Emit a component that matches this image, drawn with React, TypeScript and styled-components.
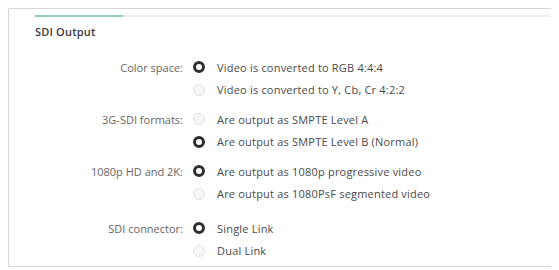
import styled, { createGlobalStyle } from 'styled-components';

type OptionGroup = {
  label: string;
  options: string[];
  selected: number;
};

const groups: OptionGroup[] = [
  {
    label: 'Color space:',
    options: ['Video is converted to RGB 4:4:4', 'Video is converted to Y, Cb, Cr 4:2:2'],
    selected: 0,
  },
  {
    label: '3G-SDI formats:',
    options: ['Are output as SMPTE Level A', 'Are output as SMPTE Level B (Normal)'],
    selected: 1,
  },
  {
    label: '1080p HD and 2K:',
    options: ['Are output as 1080p progressive video', 'Are output as 1080PsF segmented video'],
    selected: 0,
  },
  {
    label: 'SDI connector:',
    options: ['Single Link', 'Dual Link'],
    selected: 0,
  },
];

const App = () => {
  return (
    <>
      <GlobalStyle />
      <Panel>
        <TabStrip>
          <TabIndicator />
        </TabStrip>
        <Title>SDI Output</Title>
        <Form>
          {groups.map((group) => (
            <Group key={group.label}>
              <Label>{group.label}</Label>
              <Options>
                {group.options.map((option, i) => (
                  <Option key={option}>
                    <Radio $checked={i === group.selected} />
                    <OptionText>{option}</OptionText>
                  </Option>
                ))}
              </Options>
            </Group>
          ))}
        </Form>
      </Panel>
    </>
  );
};

const GlobalStyle = createGlobalStyle`
  body {
    margin: 8px;
    background: #ffffff;
    font-family: 'Open Sans', 'Noto Sans', sans-serif;
  }
`;

const Panel = styled.section`
  width: 549px;
  height: 259px;
  box-sizing: border-box;
  border: 1px solid #d6d6d6;
  border-radius: 2px;
  box-shadow: 0 0 2px rgba(0, 0, 0, 0.12);
  background: #ffffff;
  padding: 6px 3px 0 26px;
`;

const TabStrip = styled.div`
  height: 2px;
  background: #eeeeee;
`;

const TabIndicator = styled.div`
  width: 88px;
  height: 2px;
  background: #92cfb8;
`;

const Title = styled.h3`
  margin: 8px 0 0;
  font-size: 11px;
  line-height: 14px;
  font-weight: 600;
  letter-spacing: 0.2px;
  color: #3a3a3a;
`;

const Form = styled.div`
  display: flex;
  flex-direction: column;
  gap: 7px;
  margin-top: 17px;
`;

const Group = styled.div`
  display: flex;
  &:last-child {
    margin-top: 5px;
  }
`;

const Label = styled.div`
  width: 148px;
  text-align: right;
  font-size: 11px;
  line-height: 23px;
  color: #666666;
`;

const Options = styled.div`
  display: flex;
  flex-direction: column;
  margin-left: 10px;
`;

const Option = styled.div`
  display: flex;
  align-items: center;
  height: 22.5px;
`;

const Radio = styled.span<{ $checked: boolean }>`
  width: 12px;
  height: 12px;
  box-sizing: border-box;
  border-radius: 50%;
  border: ${({ $checked }) => ($checked ? '3px solid #2e2e2e' : '1px solid #e2e2e2')};
  background: ${({ $checked }) => ($checked ? '#ffffff' : '#f7f7f7')};
`;

const OptionText = styled.span`
  margin-left: 12px;
  font-size: 11px;
  letter-spacing: 0.2px;
  color: #4a4a4a;
`;

export default App;
